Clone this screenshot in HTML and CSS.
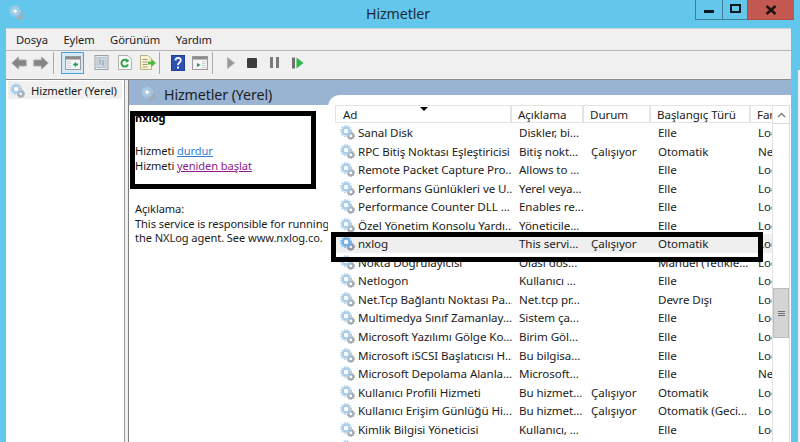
FILE: index.html
```html
<!DOCTYPE html>
<html lang="tr">
<head>
    <meta charset="UTF-8">
    <meta name="viewport" content="width=device-width, initial-scale=1.0">
    <title>Hizmetler</title>
    <link rel="stylesheet" href="styles.css">
</head>
<body>
    <svg class="defs" width="0" height="0">
        <symbol id="gear" viewBox="0 0 16 16">
            <circle cx="11.500" cy="11.500" r="2.600" fill="none" stroke="#a4abb3" stroke-width="2"/>
            <circle cx="11.500" cy="11.500" r="3.800" fill="none" stroke="#a4abb3" stroke-width="1.200" stroke-dasharray="1.300 1.100"/>
            <circle cx="6.500" cy="6.500" r="3.600" fill="none" stroke="#a9cbe6" stroke-width="2.400"/>
            <circle cx="6.500" cy="6.500" r="5.500" fill="none" stroke="#a9cbe6" stroke-width="1.600" stroke-dasharray="1.700 1.200"/>
            <circle cx="6.500" cy="6.500" r="2" fill="#fff"/>
        </symbol>
        <symbol id="gear-on" viewBox="0 0 16 16">
            <circle cx="11.500" cy="11.500" r="2.600" fill="none" stroke="#8d99a6" stroke-width="2"/>
            <circle cx="11.500" cy="11.500" r="3.800" fill="none" stroke="#8d99a6" stroke-width="1.200" stroke-dasharray="1.300 1.100"/>
            <circle cx="6.500" cy="6.500" r="3.600" fill="none" stroke="#6fb0e4" stroke-width="2.400"/>
            <circle cx="6.500" cy="6.500" r="5.500" fill="none" stroke="#6fb0e4" stroke-width="1.600" stroke-dasharray="1.700 1.200"/>
            <circle cx="6.500" cy="6.500" r="2" fill="#fff"/>
        </symbol>
    </svg>

    <header class="titlebar">
        <svg class="title-icon"><use href="#gear"/></svg>
        <div class="title">Hizmetler</div>
        <div class="winbtns">
            <div class="winbtn"><span class="glyph-min"></span></div>
            <div class="winbtn max"><span class="glyph-max"></span></div>
            <div class="winbtn close">
                <svg width="12" height="10" viewBox="0 0 12 10"><path d="M1.500 1 10.500 9M10.500 1 1.500 9" stroke="#1c1212" stroke-width="2.600" fill="none"/></svg>
            </div>
        </div>
    </header>

    <div class="frame">
        <nav class="menubar">
            <span>Dosya</span>
            <span>Eylem</span>
            <span>Görünüm</span>
            <span>Yardım</span>
        </nav>

        <div class="toolbar">
            <svg class="tool arrow" viewBox="0 0 16 14"><path d="M.8 7 7.500 1V4H15.200V10H7.500V13Z" fill="#858585" stroke="#a8a8a8"/></svg>
            <svg class="tool arrow next" viewBox="0 0 16 14"><path d="M15.200 7 8.500 1V4H.8V10H8.500V13Z" fill="#858585" stroke="#a8a8a8"/></svg>
            <i class="sep first"></i>
            <div class="tool-on">
                <svg class="tool win" viewBox="0 0 16 14"><rect x=".5" y=".5" width="15" height="13" fill="#f4f4f4" stroke="#9a9a9a"/><rect x="1" y="1" width="14" height="2.500" fill="#8c8c8c"/><path d="M5 5v7M3 5v7" stroke="#a9b6c4" stroke-dasharray="1 1"/><path d="M8 8.500 11 6v5Z" fill="#1f9d48"/><rect x="11" y="7.500" width="2" height="2" fill="#1f9d48"/></svg>
            </div>
            <svg class="tool doc" viewBox="0 0 15 15"><rect x="1" y=".5" width="13" height="14" fill="#e6edf3" stroke="#a0a0a0"/><rect x="3" y="2.500" width="9" height="10" fill="#cfd9e4" stroke="#b3bcc6"/><path d="M5 5h2M5 7h2M5 9h2M9 5v6" stroke="#8a99a9"/></svg>
            <svg class="tool refresh" viewBox="0 0 14 15"><path d="M.5.5H10L13.500 4V14.500H.5Z" fill="#fafafa" stroke="#b0b0b0"/><path d="M10 9.500A3.400 3.400 0 1 1 9.500 6" fill="none" stroke="#2fa24a" stroke-width="2"/><path d="M7.500 3.500 11.500 5.500 8.500 8Z" fill="#2fa24a"/></svg>
            <svg class="tool export" viewBox="0 0 16 15"><path d="M.5.5H8L11.500 4V14.500H.5Z" fill="#fbf3d0" stroke="#b8b08a"/><path d="M2.500 4.500h5M2.500 7h5M2.500 9.500h5M2.500 12h5" stroke="#9d9a7e"/><path d="M8 6.500h3.500V4L16 8l-4.500 4V9.500H8Z" fill="#55b948"/></svg>
            <i class="sep second"></i>
            <svg class="tool help" viewBox="0 0 14 16"><rect width="14" height="16" fill="#2d4fae"/><rect width="14" height="16" fill="none" stroke="#16308a"/><path d="M4.500 5.500C4.500 2 9.800 2 9.800 5.300C9.800 7.500 7 7.500 7 10" fill="none" stroke="#fff" stroke-width="1.800"/><rect x="6" y="11.500" width="2" height="2" fill="#fff"/></svg>
            <svg class="tool win2" viewBox="0 0 16 14"><rect x=".5" y=".5" width="15" height="13" fill="#f4f4f4" stroke="#9a9a9a"/><rect x="1" y="1" width="14" height="2.500" fill="#8c8c8c"/><path d="M5 7 8.500 9 5 11Z" fill="#1f9d48"/><path d="M11 5v7M13 5v7" stroke="#a9b6c4" stroke-dasharray="1 1"/></svg>
            <i class="sep third"></i>
            <svg class="tool play" viewBox="0 0 8 12"><path d="M.5 .5 7.500 6 .5 11.500Z" fill="#9a9a9a" stroke="#b0b0b0"/></svg>
            <span class="tool stop"></span>
            <span class="tool pause"><i></i><i></i></span>
            <svg class="tool resume" viewBox="0 0 12 12"><rect y=".5" width="3" height="11" fill="#707070"/><path d="M4.500 .5 11.500 6 4.500 11.500Z" fill="#2fb54a"/></svg>
        </div>

        <main class="main">
            <aside class="tree">
                <div class="tree-item">
                    <svg class="gear"><use href="#gear"/></svg>
                    <span>Hizmetler (Yerel)</span>
                </div>
            </aside>

            <section class="panel">
                <div class="panel-head">
                    <svg class="head-icon"><use href="#gear"/></svg>
                    <h1>Hizmetler (Yerel)</h1>
                </div>

                <div class="panel-body">
                    <div class="side">
                        <div class="side-name">nxlog</div>
                        <p class="actions">
                            Hizmeti <a class="link" href="#">durdur</a><br>
                            Hizmeti <a class="link visited" href="#">yeniden başlat</a>
                        </p>
                        <p class="about">
                            Açıklama:<br>
                            This service is responsible for running<br>
                            the NXLog agent. See www.nxlog.co.
                        </p>
                    </div>

                    <div class="listwrap">
                        <div class="list">
                            <div class="row head">
                                <div class="cell">Ad<i class="sort"></i></div>
                                <div class="cell">Açıklama</div>
                                <div class="cell">Durum</div>
                                <div class="cell">Başlangıç Türü</div>
                                <div class="cell">Far</div>
                            </div>
                            <div class="row"><div class="cell"><svg class="gear"><use href="#gear"/></svg>Sanal Disk</div><div class="cell">Diskler, bi...</div><div class="cell"></div><div class="cell">Elle</div><div class="cell">Loc</div></div>
                            <div class="row"><div class="cell"><svg class="gear"><use href="#gear"/></svg>RPC Bitiş Noktası Eşleştiricisi</div><div class="cell">Bitiş nokt...</div><div class="cell">Çalışıyor</div><div class="cell">Otomatik</div><div class="cell">Net</div></div>
                            <div class="row"><div class="cell"><svg class="gear"><use href="#gear"/></svg>Remote Packet Capture Pro...</div><div class="cell">Allows to ...</div><div class="cell"></div><div class="cell">Elle</div><div class="cell">Loc</div></div>
                            <div class="row"><div class="cell"><svg class="gear"><use href="#gear"/></svg>Performans Günlükleri ve U...</div><div class="cell">Yerel veya...</div><div class="cell"></div><div class="cell">Elle</div><div class="cell">Loc</div></div>
                            <div class="row"><div class="cell"><svg class="gear"><use href="#gear"/></svg>Performance Counter DLL ...</div><div class="cell">Enables re...</div><div class="cell"></div><div class="cell">Elle</div><div class="cell">Loc</div></div>
                            <div class="row"><div class="cell"><svg class="gear"><use href="#gear"/></svg>Özel Yönetim Konsolu Yardı...</div><div class="cell">Yöneticile...</div><div class="cell"></div><div class="cell">Elle</div><div class="cell">Loc</div></div>
                            <div class="row selected"><div class="cell"><svg class="gear"><use href="#gear-on"/></svg>nxlog</div><div class="cell">This servi...</div><div class="cell">Çalışıyor</div><div class="cell">Otomatik</div><div class="cell">Loc</div></div>
                            <div class="row"><div class="cell"><svg class="gear"><use href="#gear"/></svg>Nokta Doğrulayıcısı</div><div class="cell">Olası dos...</div><div class="cell"></div><div class="cell">Manuel (Tetikle...</div><div class="cell">Loc</div></div>
                            <div class="row"><div class="cell"><svg class="gear"><use href="#gear"/></svg>Netlogon</div><div class="cell">Kullanıcı ...</div><div class="cell"></div><div class="cell">Elle</div><div class="cell">Loc</div></div>
                            <div class="row"><div class="cell"><svg class="gear"><use href="#gear"/></svg>Net.Tcp Bağlantı Noktası Pa...</div><div class="cell">Net.tcp pr...</div><div class="cell"></div><div class="cell">Devre Dışı</div><div class="cell">Loc</div></div>
                            <div class="row"><div class="cell"><svg class="gear"><use href="#gear"/></svg>Multimedya Sınıf Zamanlay...</div><div class="cell">Sistem ça...</div><div class="cell"></div><div class="cell">Elle</div><div class="cell">Loc</div></div>
                            <div class="row"><div class="cell"><svg class="gear"><use href="#gear"/></svg>Microsoft Yazılımı Gölge Ko...</div><div class="cell">Birim Göl...</div><div class="cell"></div><div class="cell">Elle</div><div class="cell">Loc</div></div>
                            <div class="row"><div class="cell"><svg class="gear"><use href="#gear"/></svg>Microsoft iSCSI Başlatıcısı H...</div><div class="cell">Bu bilgisa...</div><div class="cell"></div><div class="cell">Elle</div><div class="cell">Loc</div></div>
                            <div class="row"><div class="cell"><svg class="gear"><use href="#gear"/></svg>Microsoft Depolama Alanla...</div><div class="cell">Microsoft...</div><div class="cell"></div><div class="cell">Elle</div><div class="cell">Net</div></div>
                            <div class="row"><div class="cell"><svg class="gear"><use href="#gear"/></svg>Kullanıcı Profili Hizmeti</div><div class="cell">Bu hizmet...</div><div class="cell">Çalışıyor</div><div class="cell">Otomatik</div><div class="cell">Loc</div></div>
                            <div class="row"><div class="cell"><svg class="gear"><use href="#gear"/></svg>Kullanıcı Erişim Günlüğü Hi...</div><div class="cell">Bu hizmet...</div><div class="cell">Çalışıyor</div><div class="cell">Otomatik (Geci...</div><div class="cell">Loc</div></div>
                            <div class="row"><div class="cell"><svg class="gear"><use href="#gear"/></svg>Kimlik Bilgisi Yöneticisi</div><div class="cell">Kullanıcı, ...</div><div class="cell"></div><div class="cell">Elle</div><div class="cell">Loc</div></div>
                            <div class="row"><div class="cell"><svg class="gear"><use href="#gear"/></svg></div></div>
                        </div>
                        <div class="scrollbar">
                            <div class="scroll-up">
                                <svg width="9" height="6" viewBox="0 0 9 6"><path d="M1 5 4.500 1.500 8 5" fill="none" stroke="#7a7a7a" stroke-width="1.300"/></svg>
                            </div>
                            <div class="scroll-thumb"><i></i><i></i><i></i></div>
                        </div>
                    </div>
                </div>
            </section>
        </main>
    </div>

    <!-- isaretleme kutulari -->
    <div class="mark mark-info"></div>
    <div class="mark mark-row"></div>
    <div class="edge"></div>
</body>
</html>
```

FILE: styles.css
```css
html, body {
    margin: 0;
    height: 100%;
    overflow: hidden;
}
body {
    position: relative;
    display: flex;
    flex-direction: column;
    background-color: #63c7ec;
    color: #1c1c1c;
    font-family: "Noto Sans", sans-serif;
    font-size: 11.6px;
    letter-spacing: -0.08px;
    line-height: 15px;
}
.defs {
    position: absolute;
}

/* baslik cubugu */
.titlebar {
    height: 28px;
    flex: none;
    position: relative;
}
.title-icon {
    position: absolute;
    left: 9px;
    top: 5px;
    width: 15px;
    height: 15px;
}
.title {
    text-align: center;
    font-size: 14.2px;
    line-height: 27px;
    color: #1d2b36;
    padding-right: 4px;
}
.winbtns {
    position: absolute;
    top: 0;
    left: 695px;
    display: flex;
    height: 20px;
}
.winbtn {
    width: 26px;
    height: 19px;
    border: 1px solid #3f7f98;
    border-top: none;
    border-right: none;
    display: flex;
    align-items: center;
    justify-content: center;
}
.winbtn.max {
    width: 24px;
}
.winbtn.close {
    width: 46px;
    background-color: #c2584f;
    border-color: #b04a42;
}
.glyph-min {
    width: 10px;
    height: 3px;
    margin-top: 4px;
    background-color: #0c1a20;
}
.glyph-max {
    width: 7px;
    height: 5px;
    border: 2px solid #0c1a20;
    margin-top: -2px;
}

/* ic cerceve */
.frame {
    flex: 1;
    min-height: 0;
    margin: 0 9px 0 6px;
    display: flex;
    flex-direction: column;
    background-color: #f0f0f0;
    border-top: 1px solid #c9d6dc;
}
.menubar {
    height: 21px;
    flex: none;
    display: flex;
    gap: 15.5px;
    padding-left: 10px;
    align-items: center;
    font-size: 11.2px;
    border-bottom: 1px solid #b4b4b4;
}
.toolbar {
    height: 28px;
    flex: none;
    display: flex;
    align-items: center;
    position: relative;
    border-bottom: 1px solid #8c8c8c;
}
.tool {
    display: block;
    flex: none;
}
.arrow {
    width: 16px;
    height: 14px;
    margin-left: 5px;
    margin-top: -4px;
}
.arrow.next {
    margin-left: 6px;
}
.sep {
    width: 1px;
    height: 22px;
    margin: -4px 0 0 4px;
    background-color: #a8a8a8;
}
.sep.second {
    margin-left: 3px;
}
.tool-on {
    width: 21px;
    height: 20px;
    margin: -5px 0 0 7px;
    border: 1px solid #4aa3d8;
    background-color: #d5e8f5;
    display: flex;
    align-items: center;
    justify-content: center;
}
.win {
    width: 16px;
    height: 14px;
}
.doc {
    width: 15px;
    height: 15px;
    margin: -5px 0 0 10px;
}
.refresh {
    width: 14px;
    height: 15px;
    margin: -5px 0 0 9px;
}
.export {
    width: 16px;
    height: 15px;
    margin: -5px 0 0 8px;
}
.help {
    width: 14px;
    height: 16px;
    margin: -5px 0 0 11px;
}
.win2 {
    width: 16px;
    height: 14px;
    margin: -4px 0 0 7px;
}
.play {
    width: 8px;
    height: 12px;
    margin: -5px 0 0 14px;
}
.stop {
    width: 10px;
    height: 10px;
    margin: -5px 0 0 12px;
    border-radius: 1px;
    background-color: #3c3c3c;
}
.pause {
    display: flex;
    gap: 3px;
    margin: -5px 0 0 13px;
}
.pause i {
    width: 3px;
    height: 11px;
    background-color: #7a7a7a;
}
.resume {
    width: 12px;
    height: 12px;
    margin: -5px 0 0 13px;
}

/* ana alan */
.main {
    flex: 1;
    min-height: 0;
    display: flex;
}
.tree {
    flex: none;
    width: 114px;
    background-color: #fff;
    border-right: 1px solid #9a9a9a;
    padding: 1px 2px 0 2px;
}
.tree-item {
    height: 18px;
    padding-left: 2px;
    display: flex;
    align-items: center;
    gap: 6px;
    font-size: 11.3px;
    background-color: #f0f0f0;
    white-space: nowrap;
}
.gear {
    width: 15px;
    height: 15px;
    flex: none;
}
.panel {
    flex: 1;
    min-width: 0;
    margin-left: 3px;
    display: flex;
    flex-direction: column;
    border-left: 1px solid #7f7f7f;
    background-color: #98b4d2;
}
.panel-head {
    height: 15px;
    flex: none;
    padding-left: 12px;
    display: flex;
    gap: 8px;
}
.head-icon {
    width: 15px;
    height: 15px;
    margin-top: 6px;
    flex: none;
    position: relative;
}
.panel-head h1 {
    margin: 0;
    font-size: 14.2px;
    font-weight: normal;
    line-height: 30px;
    white-space: nowrap;
    position: relative;
}
.panel-body {
    flex: 1;
    min-height: 0;
    display: flex;
}
.side {
    width: 199px;
    flex: none;
    margin-top: 10px;
    padding: 5px 0 0 6px;
    box-sizing: border-box;
    background-color: #fff;
    font-size: 11.1px;
    white-space: nowrap;
    overflow: hidden;
}
.side-name {
    font-weight: bold;
    color: #000;
}
.actions {
    margin: 18px 0 0 0;
}
.about {
    margin: 29px 0 0 0;
    line-height: 14.7px;
}
.link {
    color: #2f7bd6;
}
.link.visited {
    color: #8e1a8e;
}

/* hizmet listesi */
.listwrap {
    flex: 1;
    min-width: 0;
    display: flex;
    padding: 10px 0 0 7px;
    background-color: #fff;
    border-top-left-radius: 12px;
}
.list {
    flex: 1;
    min-width: 0;
    overflow: hidden;
}
.row {
    display: grid;
    grid-template-columns: 177px 72px 67px 100px 21px;
    height: 18.56px;
    align-items: center;
    white-space: nowrap;
}
.row.head {
    height: 18.2px;
    align-items: stretch;
    position: relative;
}
.row.head .cell {
    padding-left: 6px;
    line-height: 17px;
    border-right: 2px solid #e4e4e4;
    border-bottom: 1px solid #e4e4e4;
    border-top: 1px solid #e4e4e4;
    box-sizing: border-box;
}
.row.head .cell:first-child {
    padding-left: 7px;
    border-left: 1px solid #e4e4e4;
}
.row.head .cell:last-child {
    border-right: none;
}
.cell {
    overflow: hidden;
    padding-left: 7px;
    display: flex;
    align-items: center;
    min-width: 0;
}
.row .cell:first-child {
    padding-left: 5px;
    gap: 3px;
}
.row.selected {
    background-color: #efefef;
}
.sort {
    position: absolute;
    left: 85px;
    top: 2px;
    border-left: 4px solid transparent;
    border-right: 4px solid transparent;
    border-top: 4px solid #000;
}
.scrollbar {
    width: 16px;
    flex: none;
    margin-right: 1px;
    border-left: 1px solid #e2e2e2;
    border-right: 1px solid #dcdcdc;
    position: relative;
}
.scroll-up {
    height: 17px;
    border-top: 1px solid #dcdcdc;
    border-bottom: 1px solid #dcdcdc;
    display: flex;
    align-items: center;
    justify-content: center;
}
.scroll-thumb {
    height: 50px;
    margin-top: 164px;
    background-color: #d4d4d4;
    border: 1px solid #bcbcbc;
    box-sizing: border-box;
    display: flex;
    flex-direction: column;
    gap: 1px;
    align-items: center;
    justify-content: center;
}
.scroll-thumb i {
    width: 7px;
    height: 1px;
    background-color: #6e6e6e;
}

/* siyah isaretleme kutulari */
.mark {
    position: absolute;
    border: 5px solid #000;
    box-sizing: border-box;
}
.mark-info {
    left: 130px;
    top: 111px;
    width: 186px;
    height: 78px;
}
.mark-row {
    left: 331px;
    top: 232px;
    width: 432px;
    height: 30px;
}

/* sagdaki pencere kenari */
.edge {
    position: absolute;
    right: 0;
    top: 70px;
    bottom: 0;
    width: 2px;
    background-color: #eef1f2;
}
```
